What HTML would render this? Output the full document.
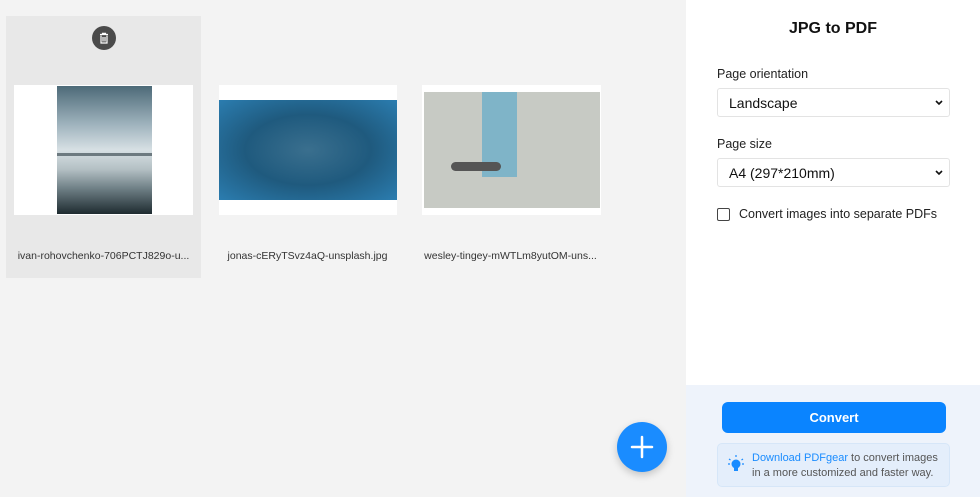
<!DOCTYPE html>
<html><head><style>
*{margin:0;padding:0;box-sizing:border-box}
body{width:980px;height:497px;overflow:hidden;background:#f3f3f3;font-family:"Liberation Sans",sans-serif;position:relative}
.abs{position:absolute}
.fn{position:absolute;top:250px;font-size:10.5px;color:#333;width:195px;text-align:center;white-space:nowrap}
.thumb{position:absolute;top:85px;width:179px;height:130px;background:#fff}
.sel{position:absolute;left:717px;width:233px;height:29px;border:1px solid #e3e3e3;border-radius:3px;background:#fff;font-size:14px;color:#111;padding:6px 0 0 11px}
.sel svg{position:absolute;right:5px;top:10px}
.lbl{position:absolute;left:717px;font-size:12.5px;color:#222}
</style></head><body>
<div class="abs" style="left:6px;top:16px;width:195px;height:262px;background:#e8e8e8"></div>
<div class="abs" style="left:92px;top:26px;width:24px;height:24px;border-radius:50%;background:#4a4a4a">
<svg width="24" height="24" viewBox="0 0 24 24"><path d="M8 8.5h8M10.5 8.5V7.3h3v1.2M9 9.5v7.5h6V9.5M11 11v4.5M13 11v4.5" stroke="#fff" stroke-width="1.2" fill="none"/></svg></div>
<div class="thumb" style="left:14px"><div class="abs" style="left:43px;top:1px;width:95px;height:128px;background:linear-gradient(180deg,#4d6a78 0%,#9fb3bd 30%,#d7e0e4 50%,#b4c0c4 65%,#6f8086 80%,#1e2b30 100%)"></div><div class="abs" style="left:43px;top:68px;width:95px;height:3px;background:#6d7a80"></div></div>
<div class="thumb" style="left:219px;width:178px"><div class="abs" style="left:0;top:15px;width:178px;height:100px;background:radial-gradient(ellipse at 50% 50%,#3a6f8e 0%,#1f5a7e 50%,#2b7db0 100%)"></div></div>
<div class="thumb" style="left:422px"><div class="abs" style="left:2px;top:7px;width:176px;height:116px;background:#c7cac4"></div><div class="abs" style="left:60px;top:7px;width:35px;height:85px;background:#7fb4c8"></div><div class="abs" style="left:29px;top:77px;width:50px;height:9px;border-radius:5px;background:#555"></div></div>
<div class="fn" style="left:6px">ivan-rohovchenko-706PCTJ829o-u...</div>
<div class="fn" style="left:210px">jonas-cERyTSvz4aQ-unsplash.jpg</div>
<div class="fn" style="left:413px">wesley-tingey-mWTLm8yutOM-uns...</div>
<div class="abs" style="left:617px;top:422px;width:50px;height:50px;border-radius:50%;background:#1a8cff;box-shadow:0 3px 8px rgba(0,0,0,.2)"><svg width="50" height="50"><path d="M25 15v20M15 25h20" stroke="#fff" stroke-width="2.5" stroke-linecap="round"/></svg></div>
<div class="abs" style="left:686px;top:0;width:294px;height:385px;background:#fff"></div>
<div class="abs" style="left:686px;top:385px;width:294px;height:112px;background:#eef3fb"></div>
<div class="abs" style="left:686px;top:20px;width:294px;text-align:center;font-size:16px;font-weight:bold;color:#111">JPG to PDF</div>
<div class="lbl" style="top:67px">Page orientation</div>
<div class="sel" style="top:88px">Landscape<svg width="10" height="8"><path d="M2 2l3 3 3-3" stroke="#111" stroke-width="1.6" fill="none"/></svg></div>
<div class="lbl" style="top:137px">Page size</div>
<div class="sel" style="top:158px">A4 (297*210mm)<svg width="10" height="8"><path d="M2 2l3 3 3-3" stroke="#111" stroke-width="1.6" fill="none"/></svg></div>
<div class="abs" style="left:717px;top:208px;width:13px;height:13px;border:1px solid #444;border-radius:2px"></div>
<div class="abs" style="left:739px;top:207px;font-size:12.5px;color:#222">Convert images into separate PDFs</div>
<div class="abs" style="left:722px;top:402px;width:224px;height:31px;border-radius:6px;background:#0a84ff;color:#fff;font-weight:bold;font-size:13px;text-align:center;line-height:31px">Convert</div>
<div class="abs" style="left:717px;top:443px;width:233px;height:44px;border:1px solid #d6e6f8;border-radius:5px;background:#e4eefb"></div>
<svg class="abs" style="left:728px;top:455px" width="16" height="18"><g stroke="#1a8cff" stroke-width="1.2"><path d="M8 0v2M1 4l1.5 1M15 4l-1.5 1M0 9h2M14 9h2"/></g><circle cx="8" cy="9" r="4.5" fill="#1a8cff"/><rect x="6" y="13" width="4" height="3" fill="#1a8cff"/></svg>
<div class="abs" style="left:752px;top:451px;font-size:11px;line-height:15px;color:#555;width:188px">
<span style="color:#1a8cff">Download PDFgear</span> to convert images in a more customized and faster way.</div>
</body></html>
